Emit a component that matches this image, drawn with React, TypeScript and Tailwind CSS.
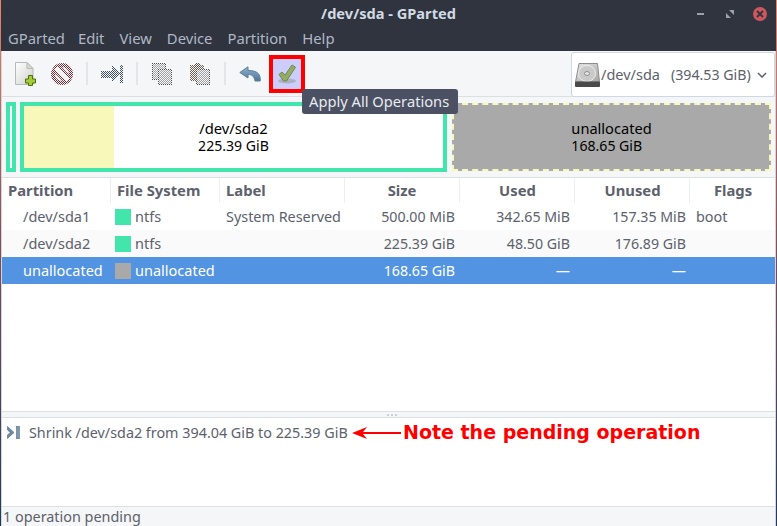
import React from "react";

const font = { fontFamily: '"Noto Sans", sans-serif' };

function Dither({ id, color }: { id: string; color: string }) {
  return (
    <pattern id={id} width="2" height="2" patternUnits="userSpaceOnUse">
      <rect width="2" height="2" fill="#f5f6f7" />
      <rect width="1" height="1" fill={color} />
      <rect x="1" y="1" width="1" height="1" fill={color} />
    </pattern>
  );
}

function NewIcon() {
  return (
    <svg className="block" width="21" height="24" viewBox="0 0 21 24">
      <defs>
        <linearGradient id="pg" x1="0" y1="0" x2="1" y2="1">
          <stop offset="0" stopColor="#ffffff" />
          <stop offset="1" stopColor="#cfcfcb" />
        </linearGradient>
      </defs>
      <path d="M.5.5H12L18 6.500V22.500H.5Z" fill="url(#pg)" stroke="#b9b9b5" />
      <path d="M12 .5V6.500H18Z" fill="#d8d8d4" stroke="#b9b9b5" />
      <path d="M13.500 13.500h4v3.500h3v4h-3v2.500h-4V21h-3v-4h3z" fill="#a4cc3a" stroke="#4f6f0a" />
    </svg>
  );
}

function DeleteIcon() {
  return (
    <svg className="block" width="22" height="22" viewBox="0 0 22 22">
      <defs>
        <Dither id="dr" color="#6e2c32" />
      </defs>
      <circle cx="11" cy="11" r="11" fill="url(#dr)" />
      <circle cx="11" cy="11" r="7" fill="#efeff0" />
      <path d="M5 5L17 17" stroke="url(#dr)" strokeWidth="9" />
      <path d="M5 5L17 17" stroke="#f3f3f4" strokeWidth="4.500" />
    </svg>
  );
}

function ResizeIcon() {
  return (
    <svg className="block" width="22" height="18" viewBox="0 0 22 18" shapeRendering="crispEdges">
      <defs>
        <Dither id="db" color="#40505f" />
      </defs>
      <path d="M0 6H11V1L19 9 11 17V13H0Z" fill="url(#db)" />
      <rect x="19" y="0" width="3" height="18" fill="url(#db)" />
    </svg>
  );
}

function Sheet({ x, y, w, h, fill, stroke }: { x: number; y: number; w: number; h: number; fill: string; stroke: string }) {
  return (
    <>
      <rect x={x} y={y} width={w} height={h} fill="#f5f6f7" />
      <rect x={x} y={y} width={w} height={h} fill={fill} />
      <rect x={x + 0.5} y={y + 0.5} width={w - 1} height={h - 1} fill="none" stroke={stroke} />
    </>
  );
}

function CopyIcon() {
  return (
    <svg className="block" width="20" height="22" viewBox="0 0 20 22" shapeRendering="crispEdges">
      <defs>
        <Dither id="dc" color="#a2a2a2" />
        <Dither id="dd" color="#4e4e4e" />
      </defs>
      <Sheet x={0} y={0} w={14} h={17} fill="url(#dc)" stroke="url(#dd)" />
      <Sheet x={6} y={6} w={14} h={16} fill="url(#dc)" stroke="url(#dd)" />
    </svg>
  );
}

function PasteIcon() {
  return (
    <svg className="block" width="20" height="22" viewBox="0 0 20 22" shapeRendering="crispEdges">
      <defs>
        <Dither id="dp" color="#75614b" />
        <Dither id="dq" color="#a2a2a2" />
        <Dither id="ds" color="#4e4e4e" />
      </defs>
      <rect x="0" y="2" width="14" height="16" fill="url(#dp)" />
      <rect x="5" y="0" width="5" height="4" fill="url(#ds)" />
      <Sheet x={6} y={6} w={14} h={16} fill="url(#dq)" stroke="url(#ds)" />
    </svg>
  );
}

function UndoIcon() {
  return (
    <svg className="block" width="22" height="16" viewBox="0 0 22 16">
      <defs>
        <linearGradient id="ug" x1="0" y1="0" x2="0" y2="1">
          <stop offset="0" stopColor="#8fb2d0" />
          <stop offset="1" stopColor="#4f7697" />
        </linearGradient>
      </defs>
      <path d="M9 .8L.8 6.500 9 12V8.500c4 0 6 1.500 7 6.500h5.200c.5-6-1.700-10.500-12.200-10.500Z" fill="url(#ug)" stroke="#5d7f9d" strokeLinejoin="round" />
    </svg>
  );
}

function ApplyIcon() {
  return (
    <svg className="block" width="20" height="20" viewBox="0 0 20 20">
      <ellipse cx="10" cy="17" rx="9" ry="2.500" fill="#adb0c6" />
      <path d="M2 10.500l3-2.500 3 3.200L15 1l3.500 2.200L9.500 17h-3Z" fill="#93ac66" stroke="#70894a" strokeLinejoin="round" />
    </svg>
  );
}

function DiskIcon() {
  return (
    <svg className="block" width="25" height="24" viewBox="0 0 25 24">
      <defs>
        <linearGradient id="dk" x1="0" y1="0" x2="1" y2="1">
          <stop offset="0" stopColor="#e6e6e6" />
          <stop offset="1" stopColor="#a6a6a6" />
        </linearGradient>
      </defs>
      <path d="M4 .5H22.500L24.500 19H.5Z" fill="url(#dk)" stroke="#8c8c8c" />
      <ellipse cx="12" cy="10.500" rx="8.500" ry="8" fill="#c9c9c9" stroke="#ededed" />
      <ellipse cx="12" cy="10.500" rx="2.500" ry="2" fill="#e4e4e4" stroke="#8f8f8f" />
      <rect x="0" y="18.500" width="25" height="5.500" rx="1" fill="#4a4a4a" />
    </svg>
  );
}

function OpIcon() {
  return (
    <svg className="block" width="13" height="13" viewBox="0 0 13 13">
      <path d="M.5 .5L7 6.500.5 12.500V9L3.200 6.500.5 4Z" fill="#6c8aa3" stroke="#4f6c85" strokeWidth="0.600" />
      <rect x="9.300" y="0.300" width="3.200" height="12.400" fill="#7d97ad" stroke="#5d7890" strokeWidth="0.600" />
    </svg>
  );
}

function Sep({ cls }: { cls: string }) {
  return <div className={`h-[23px] w-[2px] bg-[#e3e5e8] ${cls}`} />;
}

const COLS = "grid grid-cols-[109px_109px_125px_115px_115px_115px_1fr]";

function Swatch({ color }: { color: string }) {
  return <span className="h-4 w-4 shrink-0" style={{ backgroundColor: color }} />;
}

type Row = {
  name: string;
  fs: string;
  color: string;
  label: string;
  size: string;
  used: string;
  unused: string;
  flags: string;
  cls: string;
};

const rows: Row[] = [
  { name: "/dev/sda1", fs: "ntfs", color: "#42e5ac", label: "System Reserved", size: "500.00 MiB", used: "342.65 MiB", unused: "157.35 MiB", flags: "boot", cls: "bg-white text-[#5c616c]" },
  { name: "/dev/sda2", fs: "ntfs", color: "#42e5ac", label: "", size: "225.39 GiB", used: "48.50 GiB", unused: "176.89 GiB", flags: "", cls: "bg-[#fafafa] text-[#5c616c]" },
  { name: "unallocated", fs: "unallocated", color: "#a9a9a9", label: "", size: "168.65 GiB", used: "—", unused: "—", flags: "", cls: "bg-[#5294e2] text-white" },
];

export default function App() {
  return (
    <div className="flex h-[526px] w-[777px] overflow-hidden bg-gradient-to-b from-[#e8876a] via-[#7a4a5a] to-[#1c3a5c] px-px text-[14.4px] text-[#5c616c]" style={font}>
      <div className="flex min-w-0 flex-1 flex-col bg-[#f5f6f7]">
        {/* Title bar */}
        <div className="relative flex h-[27px] shrink-0 items-center justify-center bg-[#2f343f]">
          <span className="text-[14.6px] font-bold text-[#d3dae3]">/dev/sda - GParted</span>
          <div className="absolute right-[9px] top-0 flex h-[27px] items-center">
            <span className="h-[2px] w-[7px] bg-[#9aa0ac]" />
            <svg className="ml-[22px]" width="8" height="8" viewBox="0 0 8 8">
              <path d="M3 0H8V5ZM5 8H0V3Z" fill="#9aa0ac" />
            </svg>
            <span className="ml-[19px] flex h-[14px] w-[14px] items-center justify-center rounded-full bg-[#cc575d]">
              <svg width="8" height="8" viewBox="0 0 8 8">
                <path d="M1 1l6 6M7 1L1 7" stroke="#2f343f" strokeWidth="1.800" />
              </svg>
            </span>
          </div>
        </div>

        {/* Menu bar */}
        <div className="flex h-[24px] shrink-0 items-center gap-[15px] bg-[#2f343f] px-[7px] pb-[1px] text-[14.8px] text-[#afb8c6]">
          <span className="mr-[-2px]">GParted</span>
          {["Edit", "View", "Device", "Partition", "Help"].map((m) => (
            <span key={m}>{m}</span>
          ))}
        </div>

        <div className="flex min-h-0 flex-1 flex-col border-x border-[#d3d6da]">
          {/* Toolbar */}
          <div className="relative flex h-[46px] shrink-0 items-center border-b border-[#dcdfe3] pl-[13px]">
            <NewIcon />
            <div className="ml-[15px]"><DeleteIcon /></div>
            <Sep cls="ml-[13px]" />
            <div className="ml-[13px]"><ResizeIcon /></div>
            <Sep cls="ml-[13px]" />
            <div className="ml-[14px]"><CopyIcon /></div>
            <div className="ml-[18px]"><PasteIcon /></div>
            <Sep cls="ml-[14px]" />
            <div className="ml-[13px]"><UndoIcon /></div>
            <div className="ml-[8px] flex h-[38px] w-[36px] items-center justify-center border-[4px] border-[#ff0000] bg-[#cdcdfb]">
              <ApplyIcon />
            </div>

            <div className="absolute right-0 top-[1px] flex h-[45px] w-[204px] items-center rounded-[3px] border border-[#cfd6e6] bg-white pl-[3px]">
              <DiskIcon />
              <span className="ml-[1px] text-[14.5px]">/dev/sda</span>
              <span className="ml-[11px] text-[14.2px]">(394.53 GiB)</span>
              <svg className="ml-[6px]" width="10" height="6" viewBox="0 0 10 6">
                <path d="M1 1l4 4 4-4" fill="none" stroke="#5c616c" strokeWidth="1.500" />
              </svg>
            </div>

            <div className="absolute left-[300px] top-[38px] z-10 flex h-[25px] items-center rounded-[3px] bg-[#4b5162] pl-[7px] pr-[9px] text-[14.7px] text-[#e8ebf0]">
              Apply All Operations
            </div>
          </div>

          {/* Disk visual */}
          <div className="flex h-[81px] shrink-0 items-start gap-[4px] border-b border-[#dcdfe3] pl-[4px] pr-[4px] pt-[5px]">
            <div className="h-[70px] w-[10px] shrink-0 border-[4px] border-[#42e5ac] bg-white" />
            <div className="relative flex h-[70px] w-[427px] shrink-0 flex-col items-center justify-center border-[4px] border-[#42e5ac] bg-white leading-[17px] text-black">
              <div className="absolute inset-y-0 left-0 w-[90px] bg-[#f8f8ba]" />
              <span className="relative text-[14.8px]">/dev/sda2</span>
              <span className="relative text-[14.1px]">225.39 GiB</span>
            </div>
            <div className="ml-[1px] mt-[1px] flex h-[68px] flex-1 flex-col items-center justify-center border-[2px] border-dashed border-[#f8f8ba] bg-[#a9a9a9] leading-[17px] text-black">
              <div className="flex flex-col items-start">
                <span className="text-[14.6px]">unallocated</span>
                <span className="text-[14.1px]">168.65 GiB</span>
              </div>
            </div>
          </div>

          {/* Partition table */}
          <div className="flex min-h-0 flex-1 flex-col bg-white">
            <div className={`${COLS} h-[25px] shrink-0 items-center text-[14.8px] font-bold`}>
              <div className="h-full border-r border-[#eceef0] pl-[6px] leading-[25px]">Partition</div>
              <div className="h-full border-r border-[#eceef0] pl-[6px] leading-[25px]">File System</div>
              <div className="h-full border-r border-[#eceef0] pl-[6px] leading-[25px]">Label</div>
              <div className="h-full border-r border-[#eceef0] text-center leading-[25px]">Size</div>
              <div className="h-full border-r border-[#eceef0] pl-[1px] text-center leading-[25px]">Used</div>
              <div className="h-full border-r border-[#eceef0] pl-[1px] text-center leading-[25px]">Unused</div>
              <div className="h-full pl-[1px] text-center leading-[25px]">Flags</div>
            </div>
            {rows.map((r) => (
              <div key={r.name} className={`${COLS} h-[27px] shrink-0 items-center ${r.cls}`}>
                <div className="pl-[21px] text-[14.5px]">{r.name}</div>
                <div className="flex items-center gap-[4px] pl-[4px] text-[14.5px]">
                  <Swatch color={r.color} />
                  <span>{r.fs}</span>
                </div>
                <div className="pl-[6px]">{r.label}</div>
                <div className="pr-[5px] text-right text-[14.2px]">{r.size}</div>
                <div className="pr-[5px] text-right text-[14.2px]">{r.used}</div>
                <div className="pr-[4px] text-right text-[14.2px]">{r.unused}</div>
                <div className="pl-[6px]">{r.flags}</div>
              </div>
            ))}
          </div>

          {/* Pane handle */}
          <div className="flex h-[7px] shrink-0 items-center justify-center gap-[2px] border-y border-[#dcdfe3] bg-[#f5f6f7] pl-[6px]">
            <span className="h-[2px] w-[2px] bg-[#c8cdd6]" />
            <span className="h-[2px] w-[2px] bg-[#c8cdd6]" />
            <span className="h-[2px] w-[2px] bg-[#c8cdd6]" />
          </div>

          {/* Operations */}
          <div className="relative h-[89px] shrink-0 border-b border-[#dcdfe3] bg-white pl-[5px] pt-[1px]">
            <div className="flex h-[27px] items-center gap-[9px]">
              <OpIcon />
              <span className="text-[14.35px]">Shrink /dev/sda2 from 394.04 GiB to 225.39 GiB</span>
            </div>
            <div className="absolute left-[350px] top-[1px] flex h-[27px] items-center">
              <svg className="block" width="49" height="14" viewBox="0 0 49 14">
                <path d="M0 7L15 1 11 6H49V8H11L15 13Z" fill="#ff0000" />
              </svg>
              <span className="ml-[2px] whitespace-nowrap text-[19px] font-bold text-[#ff0000]" style={{ fontFamily: '"DejaVu Sans", sans-serif' }}>
                Note the pending operation
              </span>
            </div>
          </div>

          {/* Status bar */}
          <div className="flex h-[19px] shrink-0 items-center pl-[1px]">1 operation pending</div>
        </div>
      </div>
    </div>
  );
}
